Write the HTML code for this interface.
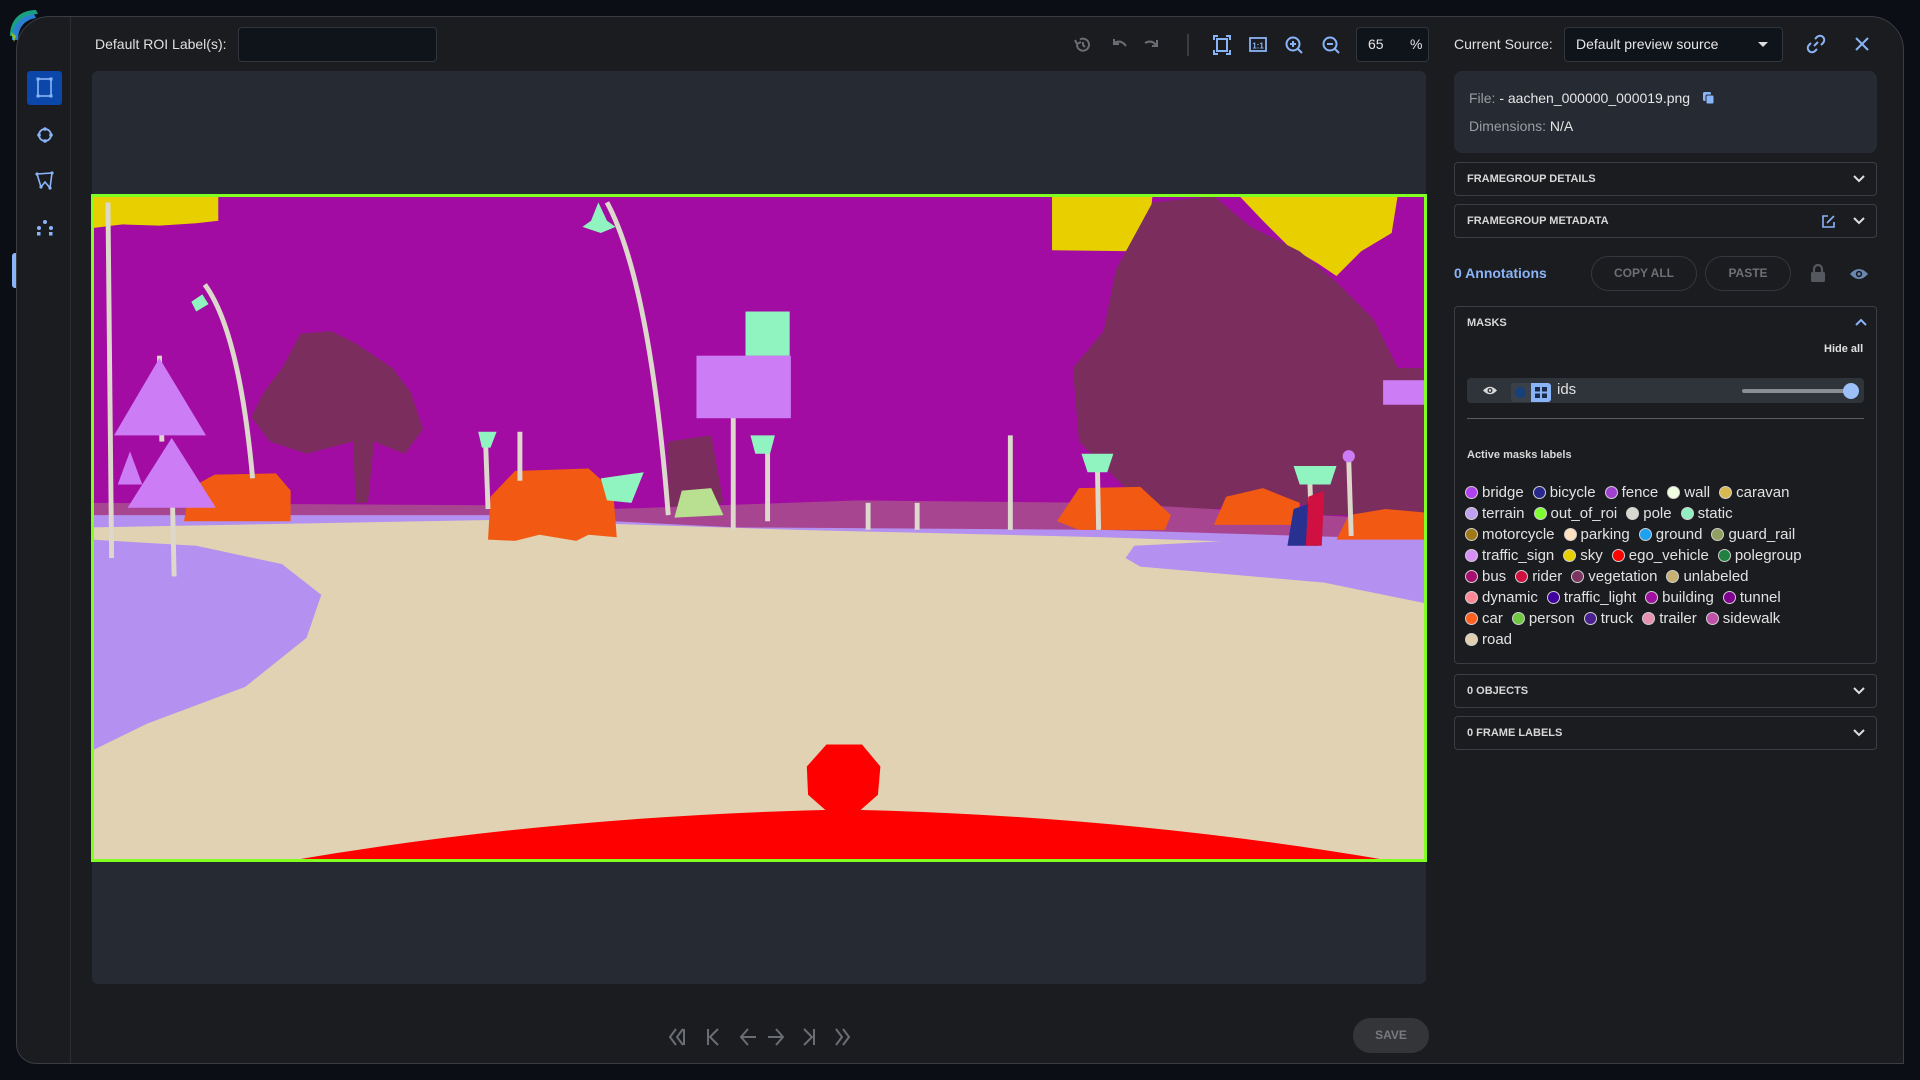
<!DOCTYPE html>
<html><head><meta charset="utf-8">
<style>
*{box-sizing:border-box;margin:0;padding:0}
body{width:1920px;height:1080px;background:#0b0e14;font-family:"Liberation Sans",sans-serif;color:#e6e6e6;position:relative;overflow:hidden}
.abs{position:absolute}
#modal{left:16px;top:16px;width:1888px;height:1048px;background:#1b1c1f;border:1px solid #3a3d44;border-radius:34px 34px 0 20px;overflow:hidden}
.side{left:0;top:0;width:54px;height:100%;border-right:1px solid #2c2e33}
.txt{font-size:14px;color:#e0e0e0}
.box{background:#0f131a;border:1px solid #31353d;border-radius:4px}
.acc{left:1437px;width:423px;height:34px;border:1px solid #3a3d44;border-radius:4px;font-size:11px;font-weight:bold;color:#d8d8d8;padding-left:12px;line-height:32px}
.chev{position:absolute;right:10px;top:9px}
.lbls{font-size:15px;line-height:21px;color:#e2e2e2;width:420px}
.lbls span{display:inline-block;margin-right:9px;white-space:nowrap}
.lbls i{display:inline-block;width:13px;height:13px;border-radius:50%;border:1.5px solid #d0d0d0;vertical-align:-2px;margin-right:4px}
.btn{height:35px;border:1px solid #34373d;border-radius:18px;font-size:12px;font-weight:bold;color:#6c6f75;text-align:center;line-height:33px}
</style></head><body>
<svg class="abs" style="left:6px;top:6px" width="40" height="40" viewBox="0 0 40 40"><path d="M4 30 C4 14 14 4 30 4 L32 8 C20 8 10 16 10 30Z" fill="#1aa080"/><path d="M6 34 C6 20 14 10 28 8 L30 12 C18 14 12 22 12 34Z" fill="#2a7fd0"/><path d="M5 26 L8 36 L10 30Z" fill="#8ac020"/></svg>
<div class="abs" style="left:12px;top:253px;width:5px;height:35px;background:#8ab4f8;border-radius:3px 0 0 3px"></div>
<div id="modal" class="abs">
 <div class="abs side"></div>
 <div class="abs" style="left:10px;top:54px;width:35px;height:34px;background:#0b47a8;border-radius:3px"></div>
 <svg class="abs" style="left:19px;top:60px" width="18" height="22"><rect x="2" y="2" width="13" height="17" fill="none" stroke="#8ab4f8" stroke-width="1.6"/><g fill="#8ab4f8"><rect x="0.5" y="0.5" width="3" height="3"/><rect x="13.5" y="0.5" width="3" height="3"/><rect x="0.5" y="17.5" width="3" height="3"/><rect x="13.5" y="17.5" width="3" height="3"/></g></svg>
 <svg class="abs" style="left:19px;top:109px" width="18" height="18"><circle cx="9" cy="9" r="6" fill="none" stroke="#8ab4f8" stroke-width="1.8"/><g fill="#8ab4f8"><circle cx="9" cy="3" r="1.8"/><circle cx="9" cy="15" r="1.8"/><circle cx="3" cy="9" r="1.8"/><circle cx="15" cy="9" r="1.8"/></g></svg>
 <svg class="abs" style="left:18px;top:154px" width="20" height="20"><path d="M2 3 L17 2 L15 17 L10 11 L6 16Z" fill="none" stroke="#8ab4f8" stroke-width="1.6"/><g fill="#8ab4f8"><circle cx="2" cy="3" r="1.6"/><circle cx="17" cy="2" r="1.6"/><circle cx="15" cy="17" r="1.6"/><circle cx="6" cy="16" r="1.6"/></g></svg>
 <svg class="abs" style="left:18px;top:202px" width="20" height="18"><g fill="#8ab4f8"><circle cx="10" cy="3" r="2"/><circle cx="4" cy="9" r="2"/><circle cx="16" cy="9" r="2"/><rect x="2" y="13" width="3.5" height="3.5"/><rect x="14" y="13" width="3.5" height="3.5"/></g></svg>
 <div class="abs txt" style="left:78px;top:18px;line-height:18px;font-size:14px">Default ROI Label(s):</div>
 <div class="abs box" style="left:221px;top:10px;width:199px;height:35px"></div>
 <svg class="abs" style="left:1055px;top:17px" width="290" height="22" viewBox="0 0 290 22" fill="none" stroke-width="2">
  <g stroke="#6a6d72"><path d="M5 11 A6 6 0 1 0 8 5.5"/><path d="M3 6 L5 10 L9 8"/><path d="M11 8 V11 L13 13"/>
  <path d="M42 9 Q49 5 54 12"/><path d="M42 5 V10 H47"/>
  <path d="M85 12 Q80 5 73 9"/><path d="M85 6 V12 H80"/></g>
  <line x1="116" y1="0" x2="116" y2="22" stroke="#44474d" stroke-width="1.5"/>
  <g stroke="#8ab4f8"><path d="M146 2 H142 V6 M154 2 H158 V6 M142 16 V20 H146 M158 16 V20 H154"/><rect x="145" y="5" width="10" height="12"/>
  <rect x="178" y="4" width="16" height="13" stroke-width="1.8"/><text x="186" y="14.5" fill="#8ab4f8" stroke="none" font-size="8" font-weight="bold" text-anchor="middle" font-family="Liberation Sans">1:1</text>
  <circle cx="221" cy="10" r="6.5"/><path d="M226 15 L230 19 M218 10 H224 M221 7 V13"/>
  <circle cx="258" cy="10" r="6.5"/><path d="M263 15 L267 19 M255 10 H261"/></g>
 </svg>
 <div class="abs box" style="left:1339px;top:10px;width:73px;height:35px;font-size:14px;line-height:33px"><span style="position:absolute;left:11px">65</span><span style="position:absolute;left:53px">%</span></div>
 <div class="abs txt" style="left:1437px;top:18px;font-size:14px;line-height:18px">Current Source:</div>
 <div class="abs box" style="left:1547px;top:10px;width:219px;height:35px;font-size:14px;line-height:33px;padding-left:11px;color:#e8e8e8">Default preview source<span style="position:absolute;right:14px;top:14px;border-left:5px solid transparent;border-right:5px solid transparent;border-top:5px solid #ddd"></span></div>
 <svg class="abs" style="left:1789px;top:17px" width="20" height="20" fill="none" stroke="#8ab4f8" stroke-width="2"><path d="M8 12 L12 8"/><path d="M9 5 L11 3 A3 3 0 0 1 17 9 L15 11"/><path d="M11 15 L9 17 A3 3 0 0 1 3 11 L5 9"/></svg>
 <svg class="abs" style="left:1838px;top:20px" width="14" height="14" stroke="#8ab4f8" stroke-width="2"><path d="M1 1 L13 13 M13 1 L1 13"/></svg>
 <div class="abs" style="left:1437px;top:54px;width:423px;height:82px;background:#262a33;border-radius:8px"></div>
 <div class="abs" style="left:1452px;top:73px;font-size:14px;color:#9a9da3">File: <span style="color:#e6e6e6">- aachen_000000_000019.png</span></div>
 <svg class="abs" style="left:1685px;top:74px" width="14" height="14"><rect x="1" y="1" width="8" height="9" rx="1.5" fill="#8ab4f8"/><rect x="4" y="4" width="8" height="9" rx="1.5" fill="#8ab4f8" stroke="#262a33"/></svg>
 <div class="abs" style="left:1452px;top:101px;font-size:14px;color:#9a9da3">Dimensions: <span style="color:#e6e6e6">N/A</span></div>
 <div class="abs acc" style="top:145px">FRAMEGROUP DETAILS<svg class="chev" width="14" height="14" stroke="#ddd" stroke-width="2" fill="none"><path d="M2 4 L7 9 L12 4"/></svg></div>
 <div class="abs acc" style="top:187px">FRAMEGROUP METADATA<svg class="abs" style="right:40px;top:9px" width="15" height="15" fill="none" stroke="#8ab4f8" stroke-width="1.6"><path d="M7 2 H2 V13 H13 V8"/><path d="M6 9 L13 2"/></svg><svg class="chev" width="14" height="14" stroke="#ddd" stroke-width="2" fill="none"><path d="M2 4 L7 9 L12 4"/></svg></div>
 <div class="abs" style="left:1437px;top:248px;font-size:14px;font-weight:bold;color:#8ab4f8">0 Annotations</div>
 <div class="abs btn" style="left:1574px;top:239px;width:106px">COPY ALL</div>
 <div class="abs btn" style="left:1688px;top:239px;width:86px">PASTE</div>
 <svg class="abs" style="left:1793px;top:247px" width="16" height="19"><path d="M4 8 V5 A4 4 0 0 1 12 5 V8" fill="none" stroke="#55585e" stroke-width="2.2"/><rect x="1" y="8" width="14" height="10" rx="1.5" fill="#55585e"/></svg>
 <svg class="abs" style="left:1832px;top:250px" width="20" height="14"><path d="M1 7 Q10 -3 19 7 Q10 17 1 7Z" fill="#6a88b0"/><circle cx="10" cy="7" r="3.2" fill="#1b1c1f"/><circle cx="10" cy="7" r="1.6" fill="#6a88b0"/></svg>
 <div class="abs" style="left:1437px;top:289px;width:423px;height:358px;border:1px solid #3a3d44;border-radius:4px"></div>
 <div class="abs" style="left:1450px;top:300px;font-size:11px;font-weight:bold;color:#d8d8d8">MASKS</div>
 <svg class="abs" style="left:1837px;top:300px" width="14" height="10" stroke="#8ab4f8" stroke-width="2" fill="none"><path d="M2 8 L7 3 L12 8"/></svg>
 <div class="abs" style="left:1807px;top:326px;font-size:11px;font-weight:bold;color:#e0e0e0">Hide all</div>
 <div class="abs" style="left:1450px;top:361px;width:397px;height:25px;background:#2f333a;border-radius:4px"></div>
 <svg class="abs" style="left:1465px;top:368px" width="16" height="11"><path d="M1 5.5 Q8 -2 15 5.5 Q8 13 1 5.5Z" fill="#d8d8d8"/><circle cx="8" cy="5.5" r="2.5" fill="#2f333a"/><circle cx="8" cy="5.5" r="1.2" fill="#d8d8d8"/></svg>
 <div class="abs" style="left:1494px;top:366px;width:40px;height:19px;background:#3a4049;border-radius:3px"></div>
 <div class="abs" style="left:1498px;top:370px;width:11px;height:11px;border-radius:50%;background:#173f78"></div>
 <div class="abs" style="left:1514px;top:366px;width:20px;height:19px;background:#8ab4f8;border-radius:0 3px 3px 0"></div>
 <svg class="abs" style="left:1518px;top:370px" width="12" height="11" fill="#1b2a48"><rect x="0" y="0" width="5" height="4.5"/><rect x="7" y="0" width="5" height="4.5"/><rect x="0" y="6.5" width="5" height="4.5"/><rect x="7" y="6.5" width="5" height="4.5"/></svg>
 <div class="abs" style="left:1540px;top:364px;font-size:15px;color:#e0e0e0">ids</div>
 <div class="abs" style="left:1725px;top:372px;width:110px;height:4px;background:#8a8d92;border-radius:2px"></div>
 <div class="abs" style="left:1826px;top:366px;width:16px;height:16px;border-radius:50%;background:#9cc0f8"></div>
 <div class="abs" style="left:1450px;top:401px;width:397px;height:1px;background:#5a5d62"></div>
 <div class="abs" style="left:1450px;top:432px;font-size:11px;font-weight:bold;color:#d8d8d8">Active masks labels</div>
 <div class="abs lbls" style="left:1448px;top:465px">
  <span><i style="background:#b040f0"></i>bridge</span><span><i style="background:#28288c"></i>bicycle</span><span><i style="background:#a040d0"></i>fence</span><span><i style="background:#f0ffe0"></i>wall</span><span><i style="background:#d8b850"></i>caravan</span><br>
  <span><i style="background:#c0a0f0"></i>terrain</span><span><i style="background:#80ff30"></i>out_of_roi</span><span><i style="background:#d8d8d0"></i>pole</span><span><i style="background:#90f0c0"></i>static</span><br>
  <span><i style="background:#a07818"></i>motorcycle</span><span><i style="background:#ffe0c0"></i>parking</span><span><i style="background:#20a0f0"></i>ground</span><span><i style="background:#90a060"></i>guard_rail</span><br>
  <span><i style="background:#d890f8"></i>traffic_sign</span><span><i style="background:#e8d000"></i>sky</span><span><i style="background:#ff0000"></i>ego_vehicle</span><span><i style="background:#208040"></i>polegroup</span><br>
  <span><i style="background:#a81070"></i>bus</span><span><i style="background:#d01040"></i>rider</span><span><i style="background:#7b3560"></i>vegetation</span><span><i style="background:#c8b070"></i>unlabeled</span><br>
  <span><i style="background:#ff8898"></i>dynamic</span><span><i style="background:#4000a0"></i>traffic_light</span><span><i style="background:#a010a0"></i>building</span><span><i style="background:#800090"></i>tunnel</span><br>
  <span><i style="background:#ff6020"></i>car</span><span><i style="background:#70c840"></i>person</span><span><i style="background:#4a2090"></i>truck</span><span><i style="background:#e890b0"></i>trailer</span><span><i style="background:#c050a8"></i>sidewalk</span><br>
  <span><i style="background:#e0d0b0"></i>road</span>
 </div>
 <div class="abs acc" style="top:657px">0 OBJECTS<svg class="chev" width="14" height="14" stroke="#ddd" stroke-width="2" fill="none"><path d="M2 4 L7 9 L12 4"/></svg></div>
 <div class="abs acc" style="top:699px">0 FRAME LABELS<svg class="chev" width="14" height="14" stroke="#ddd" stroke-width="2" fill="none"><path d="M2 4 L7 9 L12 4"/></svg></div>
 <div class="abs" style="left:75px;top:54px;width:1334px;height:913px;background:#262a33;border-radius:6px"></div>
 <svg class="abs" style="left:75px;top:178px;outline:3px solid #80ff20;outline-offset:-2px" width="1334" height="666" viewBox="75 159 1088 543" preserveAspectRatio="none">
  <rect x="75" y="159" width="1088" height="543" fill="#a20ca2"/>
  <path d="M75 159 H178 V180 L160 182 L130 184 L100 183 L75 186Z" fill="#e8d000"/>
  <path d="M858 159 H940 L935 205 L858 204Z" fill="#e8d000"/>
  <path d="M1010 159 H1140 L1135 190 L1110 205 L1090 225 L1075 215 L1050 200 L1030 180Z" fill="#e8d000"/>
  <path d="M230 300 L245 272 L270 270 L290 280 L320 300 L335 320 L345 350 L330 370 L305 360 L300 410 L290 410 L288 360 L250 370 L220 360 L205 340 L215 320Z" fill="#7b2d5e"/>
  <path d="M940 165 L990 160 L1020 185 L1060 205 L1090 230 L1120 260 L1140 300 L1160 300 L1163 420 L1070 420 L1060 410 L1040 420 L1020 410 L960 420 L920 400 L880 360 L875 300 L900 270 L910 220Z" fill="#7b2d5e"/>
  <path d="M545 360 L580 355 L590 410 L545 415Z" fill="#7b2d5e"/>
  <path d="M75 410 L400 412 L500 415 L700 408 L900 410 L1163 425 L1163 440 L75 430Z" fill="#a84590"/>
  <path d="M75 420 L400 420 L600 430 L900 432 L1163 440 L1163 455 L75 440Z" fill="#b490f0"/>
  <path d="M75 430 L400 424 L650 432 L900 438 L1100 445 L1163 450 L1163 702 L75 702Z" fill="#e0d2b2"/>
  <path d="M75 440 L160 445 L230 460 L262 485 L250 520 L200 560 L120 590 L75 612Z" fill="#b490f0"/>
  <path d="M925 445 L1020 440 L1163 445 L1163 492 L1080 475 L930 462 L918 455Z" fill="#b490f0"/>
  <g fill="#f25a14">
   <path d="M150 425 L155 398 L175 387 L225 386 L237 400 L237 425Z"/>
   <path d="M398 440 L400 405 L420 384 L480 382 L500 400 L503 438 L480 436 L470 441 L440 436 L420 441Z"/>
   <path d="M862 425 L880 398 L930 397 L955 420 L950 432 L880 432Z"/>
   <path d="M990 428 L1000 405 L1030 398 L1060 410 L1060 428Z"/>
   <path d="M1090 440 L1100 420 L1130 415 L1163 418 L1163 440Z"/>
  </g>
  <g stroke="#ddd8cc" stroke-width="4" fill="none">
   <path d="M88 165 L91 455"/><path d="M140 380 L142 470"/><path d="M130 290 L132 360"/>
   <path d="M167 232 Q195 270 206 390"/><path d="M495 165 Q530 230 545 420"/>
   <path d="M598 340 L598 432"/><path d="M626 360 L626 425"/><path d="M424 352 L424 392"/><path d="M396 360 L398 415"/>
   <path d="M708 410 L708 432"/><path d="M748 410 L748 432"/><path d="M824 355 L824 432"/><path d="M895 380 L896 432"/><path d="M1100 375 L1102 437"/><path d="M1068 385 L1070 440"/>
  </g>
  <g fill="#cc7cf4">
   <path d="M130 292 L168 355 L93 355Z"/><path d="M140 357 L176 414 L104 414Z"/><path d="M106 368 L116 395 L96 395Z"/>
   <rect x="568" y="290" width="77" height="51"/><rect x="1128" y="310" width="35" height="20"/><circle cx="1100" cy="372" r="5"/>
  </g>
  <rect x="608" y="254" width="36" height="36" fill="#90f4c0"/>
  <g fill="#90f4c0">
   <path d="M488 165 L495 180 L502 185 L490 190 L475 185 L482 180Z"/><path d="M165 240 L170 248 L160 254 L156 246Z"/>
   <path d="M390 352 L405 352 L400 365 L393 365Z"/><path d="M612 355 L632 355 L628 370 L616 370Z"/>
   <path d="M882 370 L908 370 L903 385 L887 385Z"/><path d="M1055 380 L1090 380 L1085 395 L1060 395Z"/><path d="M490 390 L525 385 L515 410 L495 408Z"/>
  </g>
  <path d="M556 400 L580 398 L590 420 L550 422Z" fill="#b8e090"/>
  <path d="M1050 445 L1055 415 L1070 410 L1075 445Z" fill="#283090"/>
  <path d="M1065 445 L1067 405 L1080 400 L1078 445Z" fill="#d01040"/>
  <path d="M235 702 Q450 665 688 660 Q920 665 1135 702Z" fill="#ff0000"/>
  <path d="M674 607 L703 607 L718 625 L716 648 L700 662 L675 662 L659 648 L658 625Z" fill="#ff0000"/>
 </svg>
 <svg class="abs" style="left:651px;top:1010px" width="190" height="20" fill="none" stroke="#6a6d72" stroke-width="2">
  <path d="M8 2 L2 10 L8 18 M15 2 L9 10 L15 18 M16 2 V18"/>
  <path d="M40 2 V18 M50 2 L42 10 L50 18"/>
  <path d="M80 2 L73 10 L80 18 M73 10 H88"/>
  <path d="M108 2 L115 10 L108 18 M100 10 H115"/>
  <path d="M136 2 L144 10 L136 18 M146 2 V18"/>
  <path d="M168 2 L174 10 L168 18 M175 2 L181 10 L175 18"/>
 </svg>
 <div class="abs" style="left:1336px;top:1001px;width:76px;height:35px;border-radius:18px;background:#333539;color:#77797e;font-size:12px;font-weight:bold;text-align:center;line-height:35px">SAVE</div>
</div>
</body></html>
